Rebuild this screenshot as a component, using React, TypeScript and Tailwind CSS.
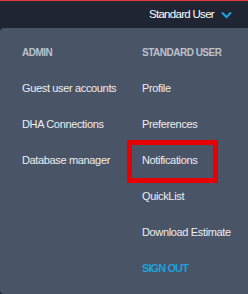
const font = { fontFamily: '"Liberation Sans", Arial, sans-serif' };

const admin = ["Guest user accounts", "DHA Connections", "Database manager"];
const user = ["Profile", "Preferences", "Notifications", "QuickList", "Download Estimate"];

function Item({ label, marked }: { label: string; marked?: boolean }) {
  return (
    <div className="relative flex h-9 items-center whitespace-nowrap text-[11px] tracking-[-0.35px] text-[#eceef1]">
      {label}
      {marked && (
        <span className="pointer-events-none absolute left-[-15px] top-[-2px] h-[43px] w-[91px] border-[5px] border-[#e60000]" />
      )}
    </div>
  );
}

export default function App() {
  return (
    <div className="flex h-[294px] w-[248px] flex-col overflow-hidden bg-[#1f2533]" style={font}>
      <div className="h-[1px] bg-[#e53935]" />
      <div className="flex h-[27px] items-center justify-end pr-[16px]">
        <span className="whitespace-nowrap text-[11.5px] tracking-[-0.7px] text-white">Standard User</span>
        <svg className="ml-[7px]" width="11" height="8" viewBox="0 0 11 8">
          <path d="M1 1.5 L5.5 6 L10 1.5" fill="none" stroke="#1fa3e6" strokeWidth="2" />
        </svg>
      </div>
      <div className="flex flex-1 rounded-l-[4px] bg-[#4a5467] pt-[6px]">
        <div className="flex w-[142px] flex-col pl-[22px]">
          <div className="flex h-9 items-center text-[10px] font-bold tracking-[-0.5px] text-[#bcc1ca]">ADMIN</div>
          {admin.map((a) => (
            <Item key={a} label={a} />
          ))}
        </div>
        <div className="flex flex-col">
          <div className="flex h-9 items-center whitespace-nowrap text-[10px] font-bold tracking-[-0.5px] text-[#bcc1ca]">
            STANDARD USER
          </div>
          {user.map((u) => (
            <Item key={u} label={u} marked={u === "Notifications"} />
          ))}
          <div className="flex h-9 items-center whitespace-nowrap text-[11px] font-bold tracking-[-0.9px] text-[#1ea0dc]">
            SIGN OUT
          </div>
        </div>
      </div>
    </div>
  );
}
